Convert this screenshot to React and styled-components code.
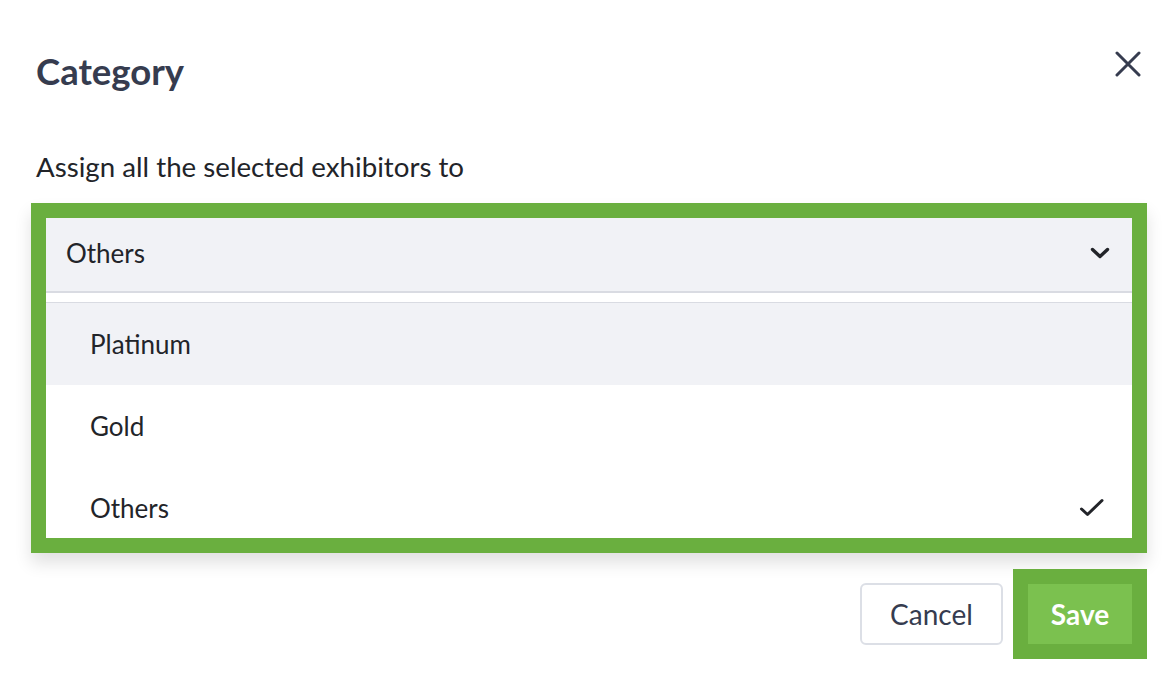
import styled, { createGlobalStyle } from 'styled-components';

const GlobalStyle = createGlobalStyle`
    html, body {
        margin: 0;
        padding: 0;
        background: #ffffff;
        font-family: Lato, "Open Sans", sans-serif;
    }
`

const Modal = styled.div`
    width: 1176px;
    height: 680px;
    box-sizing: border-box;
    padding: 49px 29px 0 31px;
    background: #ffffff;
`

const Header = styled.div`
    display: flex;
    justify-content: space-between;
    align-items: flex-start;
    padding-left: 5px;
`

const Title = styled.h2`
    margin: 0;
    font-size: 36.5px;
    line-height: 44px;
    font-weight: 700;
    color: #363c4f;
`

const CloseButton = styled.button`
    border: none;
    background: none;
    padding: 0;
    width: 28px;
    height: 28px;
    margin: 1px 5px 0 0;
    display: flex;
    align-items: center;
    justify-content: center;
    cursor: pointer;
`

const Label = styled.p`
    margin: 56px 0 0 5px;
    font-size: 27.7px;
    color: #222429;
    line-height: 36px;
`

const Highlight = styled.div`
    margin-top: 18px;
    border: 15px solid #6aaf3f;
    box-shadow: 0 10px 16px rgba(0, 0, 0, 0.12);
`

const Inner = styled.div`
    height: 320px;
    overflow: hidden;
    background: #ffffff;
`

const SelectBox = styled.div`
    height: 75px;
    background: #f1f2f6;
    border-bottom: 2px solid #d9dbe2;
    display: flex;
    align-items: center;
    justify-content: space-between;
    padding: 0 22px 4px 20px;
    box-sizing: border-box;
    font-size: 26px;
    color: #222429;
`

const Menu = styled.div`
    margin-top: 9px;
    border-top: 1px solid #d9dbe2;
`

const Option = styled.div`
    height: 82px;
    display: flex;
    align-items: center;
    justify-content: space-between;
    padding: 0 27px 0 44px;
    font-size: 26px;
    color: #222429;
    background: ${p => (p.$active ? '#f1f2f6' : '#ffffff')};
`

const Footer = styled.div`
    display: flex;
    justify-content: flex-end;
    align-items: center;
    gap: 10px;
    margin-top: 16px;
`

const CancelButton = styled.button`
    width: 143px;
    height: 62px;
    border: 2px solid #dcdfe6;
    border-radius: 6px;
    background: #ffffff;
    font-family: Lato, "Open Sans", sans-serif;
    font-size: 28px;
    color: #363c4f;
`

const SaveFrame = styled.div`
    border: 15px solid #6aaf3f;
    display: flex;
`

const SaveButton = styled.button`
    width: 104px;
    height: 60px;
    border: none;
    background: #7bc14f;
    font-family: Lato, "Open Sans", sans-serif;
    font-size: 28px;
    font-weight: 700;
    color: #ffffff;
`

const Chevron = () => (
    <svg width="20" height="12" viewBox="0 0 20 12" fill="none">
        <path d="M2.5 2.5 L10 9.5 L17.5 2.5" stroke="#222429" strokeWidth="3.4" strokeLinecap="round" strokeLinejoin="round" />
    </svg>
)

const Check = () => (
    <svg width="26" height="20" viewBox="0 0 26 20" fill="none">
        <path d="M2.5 11 L8.5 16.5 L23 2.5" stroke="#222429" strokeWidth="3" strokeLinecap="round" strokeLinejoin="round" />
    </svg>
)

const options = ['Platinum', 'Gold', 'Others']

const App = () => {
    const selected = 'Others'

    return (
        <Modal>
            <GlobalStyle />
            <Header>
                <Title>Category</Title>
                <CloseButton aria-label="Close">
                    <svg width="26" height="26" viewBox="0 0 26 26" fill="none">
                        <path d="M2 2 L24 24 M24 2 L2 24" stroke="#363c4f" strokeWidth="3" strokeLinecap="round" />
                    </svg>
                </CloseButton>
            </Header>
            <Label>Assign all the selected exhibitors to</Label>
            <Highlight>
                <Inner>
                    <SelectBox>
                        <span>{selected}</span>
                        <Chevron />
                    </SelectBox>
                    <Menu>
                        {options.map((o, i) => (
                            <Option key={o} $active={i === 0}>
                                <span>{o}</span>
                                {o === selected ? <Check /> : null}
                            </Option>
                        ))}
                    </Menu>
                </Inner>
            </Highlight>
            <Footer>
                <CancelButton>Cancel</CancelButton>
                <SaveFrame>
                    <SaveButton>Save</SaveButton>
                </SaveFrame>
            </Footer>
        </Modal>
    )
}

export default App;
